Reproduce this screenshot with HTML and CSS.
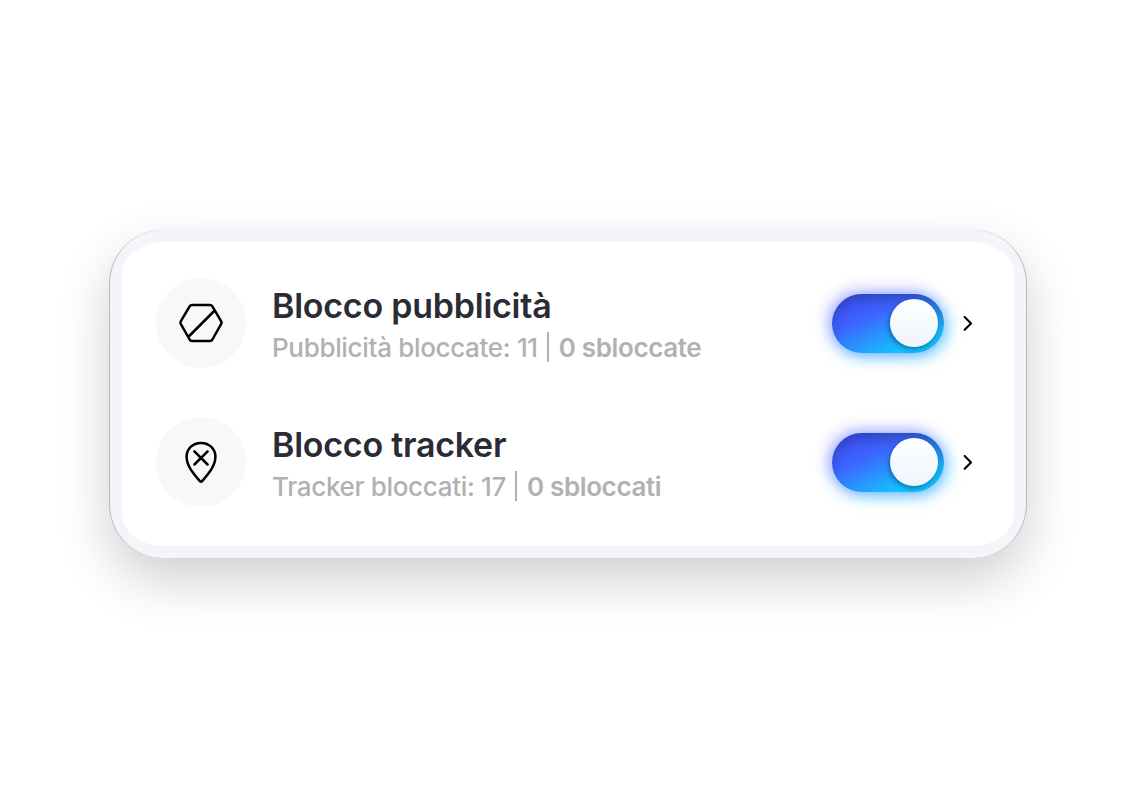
FILE: index.html
```html
<!DOCTYPE html>
<html lang="it">
  <head>
    <meta charset="utf-8">
    <title>Blocco pubblicità e tracker</title>
    <meta name="viewport" content="width=device-width, initial-scale=1.0">
    <link rel="stylesheet" href="styles.css">
  </head>
  <body>
    <div class="card">
      <div class="panel">
        <div class="row">
          <div class="icon">
            <svg width="48" height="48" viewBox="0 0 48 48">
              <path d="M15 6H33Q34.5 6 35.4 7.4L44.1 22.2Q45 23.7 44.1 25.2L35.4 40.5Q34.5 42 33 42H15Q13.5 42 12.6 40.5L3.9 25.2Q3 23.7 3.9 22.2L12.6 7.4Q13.5 6 15 6ZM11.2 38L37.2 12"/>
            </svg>
          </div>
          <div class="text">
            <h2>Blocco pubblicità</h2>
            <p>Pubblicità bloccate: 11 <span class="bar"></span> <b>0 sbloccate</b></p>
          </div>
          <div class="toggle"><div class="knob"></div></div>
          <svg class="arrow" width="10" height="16" viewBox="0 0 10 16"><path d="M1.7 2L8 8.4L1.7 14.8"/></svg>
        </div>
        <div class="row">
          <div class="icon">
            <svg width="48" height="48" viewBox="0 0 48 48">
              <path d="M24 4.9C15.6 4.9 9.6 11.1 9.6 18.7C9.6 28 16.6 35.8 22.8 43.1Q24 44.3 25.2 43.1C31.4 35.8 38.4 28 38.4 18.7C38.4 11.1 32.4 4.9 24 4.9ZM17.4 13.3L30.6 26.5M30.6 13.3L17.4 26.5"/>
            </svg>
          </div>
          <div class="text">
            <h2>Blocco tracker</h2>
            <p>Tracker bloccati: 17 <span class="bar"></span> <b>0 sbloccati</b></p>
          </div>
          <div class="toggle"><div class="knob"></div></div>
          <svg class="arrow" width="10" height="16" viewBox="0 0 10 16"><path d="M1.7 2L8 8.4L1.7 14.8"/></svg>
        </div>
      </div>
    </div>
  </body>
</html>
```
FILE: styles.css
```css
body {
  margin: 0;
  height: 788px;
  display: flex;
  justify-content: center;
  align-items: center;
  background-color: #fff;
  font-family: Inter, "Liberation Sans", sans-serif;
}
.card {
  box-sizing: border-box;
  width: 918px;
  height: 328px;
  padding: 12px;
  border-left: 1px solid #b9b9bd;
  border-right: 1px solid #b9b9bd;
  border-radius: 54px;
  background-color: #f4f5fa;
  box-shadow: 0 22px 52px rgba(0, 0, 0, 0.19);
}
.panel {
  box-sizing: border-box;
  height: 304px;
  padding: 36px 41px 0 34px;
  border-radius: 42px / 32px;
  background-color: #fff;
}
.row {
  display: flex;
  align-items: center;
  height: 90px;
  margin-bottom: 49px;
}
.icon {
  display: flex;
  justify-content: center;
  align-items: center;
  width: 90px;
  height: 90px;
  margin-right: 26px;
  border-radius: 50%;
  background-color: #f8f8f8;
}
.icon svg,
.arrow {
  fill: none;
  stroke: #000;
  stroke-width: 2.5;
  stroke-linecap: round;
  stroke-linejoin: round;
}
.arrow {
  margin-left: 19px;
  stroke-width: 2.1;
}
.text {
  flex: 1;
  padding-top: 8px;
}
h2 {
  margin: 0;
  font-size: 34px;
  font-weight: 600;
  line-height: 42px;
  letter-spacing: -0.24px;
  color: #2b2b35;
}
p {
  display: flex;
  align-items: center;
  margin: 0;
  font-size: 26px;
  font-weight: 450;
  line-height: 42px;
  letter-spacing: -0.33px;
  color: #b1b1b2;
}
b {
  font-weight: 600;
  letter-spacing: -0.38px;
}
.bar {
  width: 2px;
  height: 30px;
  margin: 0 10px 2px 9px;
  background-color: #b1b1b2;
}
.toggle {
  box-sizing: border-box;
  width: 112px;
  height: 59px;
  padding: 5px 6px;
  border-radius: 30px;
  background: linear-gradient(155deg, #4152fb 14%, #3c65ff 36%, #15c2ff 78%);
  box-shadow: inset 0 8px 14px -4px rgba(20, 50, 100, 0.5), -3px -2px 16px rgba(90, 70, 255, 0.45), 3px 4px 16px rgba(0, 190, 255, 0.55);
}
.knob {
  width: 48px;
  height: 48px;
  margin-left: auto;
  border-radius: 50%;
  background: linear-gradient(#fff, #edf5fc);
  box-shadow: -1px 2px 5px rgba(0, 30, 70, 0.5);
}
```
